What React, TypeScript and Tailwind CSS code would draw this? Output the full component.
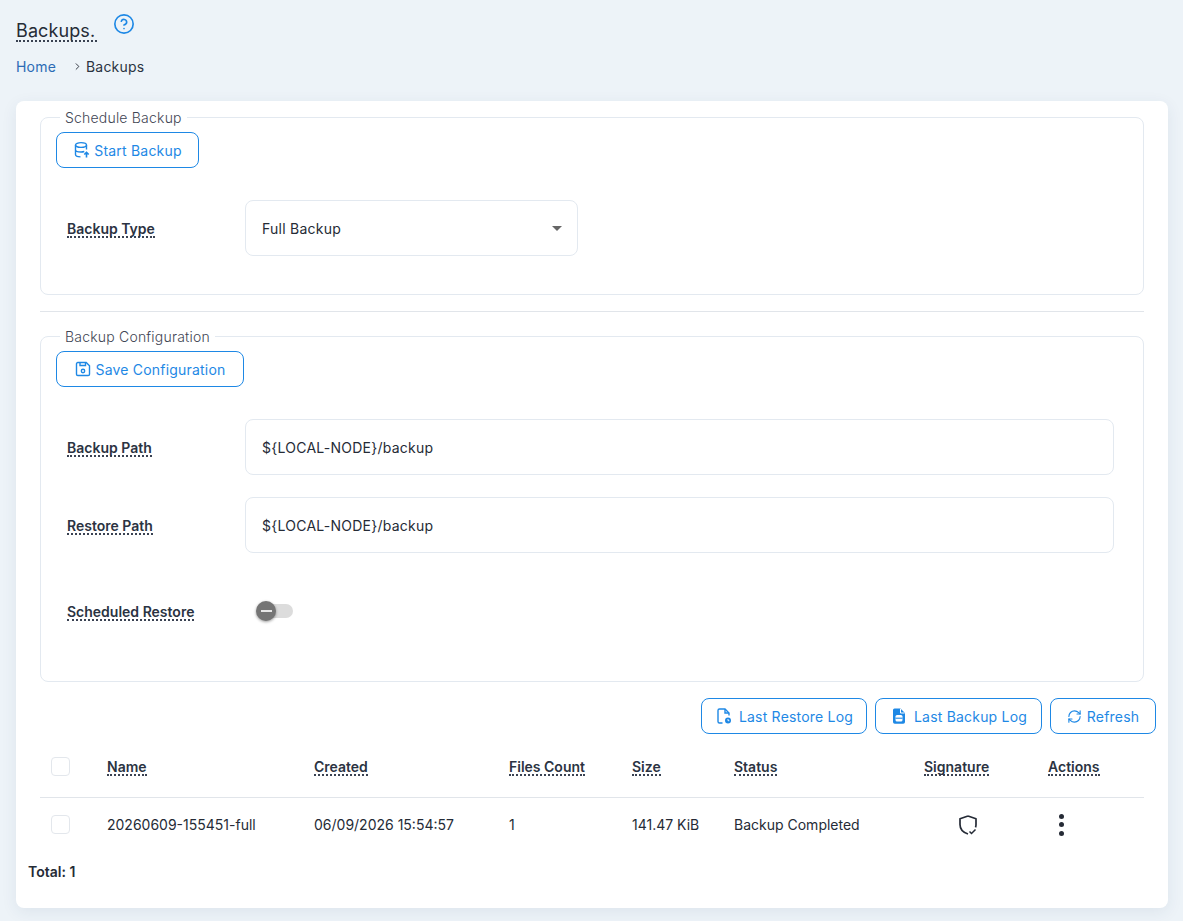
import { RefreshCw, CircleHelp, ChevronRight } from 'lucide-react';

const font = { fontFamily: 'Inter' };

function Dotted({ children, className = '' }: { children: React.ReactNode; className?: string }) {
  return (
    <span className={`border-b-2 border-dotted border-[#3a4252] leading-[15px] inline-block ${className}`}>{children}</span>
  );
}

function OutlineButton({ icon, label, className = '' }: { icon: React.ReactNode; label: string; className?: string }) {
  return (
    <button className={`h-9 flex items-center justify-center rounded-lg border border-[#1e88e5] bg-white text-[14px] text-[#1e88e5] tracking-[0.2px] ${className}`}>
      {icon}
      {label}
    </button>
  );
}

function Field({ label, value, className = '' }: { label: string; value: string; className?: string }) {
  return (
    <div className={`flex items-center ${className}`}>
      <div className="w-[178px] ml-[11px] text-[14px] font-semibold text-[#2b3342]"><Dotted>{label}</Dotted></div>
      <div className="h-14 w-[869px] flex items-center rounded-lg border border-[#e3e9f0] px-4 text-[14px] text-[#252b36] tracking-[0.25px]">{value}</div>
    </div>
  );
}

const DbIcon = (
  <svg width="18" height="18" viewBox="0 0 18 18" fill="none" stroke="currentColor" strokeWidth="1.4" className="mr-[3px]">
    <ellipse cx="8" cy="4" rx="5.5" ry="2.4" />
    <path d="M2.5 4v9.5c0 1.3 2 2.2 5 2.4M13.5 4v4.5M2.5 8.7c0 1.3 2.4 2.3 5.5 2.3 1.2 0 2.4-.2 3.3-.5" />
    <path d="M13.5 16.5v-5M11.3 13.5l2.2-2.2 2.2 2.2" strokeWidth="1.6" />
  </svg>
);

const SaveIcon = (
  <svg width="18" height="18" viewBox="0 0 18 18" fill="none" stroke="currentColor" strokeWidth="1.4" className="mr-[3px]">
    <path d="M3.8 2.5h8.4l3.3 3.3v8.4a1.3 1.3 0 0 1-1.3 1.3H3.800a1.300 1.300 0 0 1-1.300-1.300V3.800a1.300 1.300 0 0 1 1.300-1.300z" />
    <path d="M6 2.500v3h5.500v-3" />
    <circle cx="9" cy="11" r="1.700" />
  </svg>
);

const FileClockIcon = (
  <svg width="18" height="18" viewBox="0 0 18 18" fill="none" stroke="currentColor" strokeWidth="1.4" className="mr-[6px]">
    <path d="M7.500 16H4.500A1.500 1.500 0 0 1 3 14.500v-11A1.500 1.500 0 0 1 4.500 2H10l4 4v2.500" />
    <path d="M10 2v4h4" />
    <circle cx="13" cy="13.500" r="3" fill="currentColor" stroke="none" />
    <path d="M13 12v1.700h1.300" stroke="#fff" strokeWidth="0.9" />
  </svg>
);

const FileDbIcon = (
  <svg width="18" height="18" viewBox="0 0 18 18" fill="none" className="mr-[6px]">
    <path d="M4.500 1.500H10.500L15 6v9a1.800 1.800 0 0 1-1.800 1.800H4.800A1.800 1.800 0 0 1 3 15V3a1.500 1.500 0 0 1 1.500-1.500z" fill="currentColor" />
    <path d="M10.500 1.800V6h4.200" stroke="#fff" strokeWidth="1" />
    <rect x="5.500" y="8" width="7" height="6.500" rx="1.500" fill="#fff" />
    <path d="M5.500 11.200h7" stroke="currentColor" strokeWidth="1.100" />
  </svg>
);

const ShieldIcon = (
  <svg width="22" height="22" viewBox="0 0 22 22" fill="none" stroke="#252b36" strokeWidth="1.700">
    <path d="M11 2 L19 4.800 V10.500 C19 11.500 18.900 12.500 18.500 13.400 M11 20 C6.500 18.600 3 15 3 10.500 V4.800 L11 2" strokeLinejoin="round" />
    <path d="M12.500 17.500l2 2 4-4" strokeWidth="1.500" />
  </svg>
);

const columns = 'grid grid-cols-[67px_207px_195px_123px_102px_190px_124px_96px] items-center';

function Checkbox() {
  return <div className="ml-[11px] w-[19px] h-[19px] rounded-[4px] border border-[#e3e7ec] bg-white" />;
}

export default function App() {
  return (
    <div style={font} className="w-[1183px] h-[921px] overflow-hidden bg-[#edf3f8] px-4 pt-[13px] text-[#252b36]">
      <div className="flex items-start h-[35px]">
        <h1 className="mt-[9px] text-[18px] font-normal tracking-[0.1px] leading-[18px] border-b-2 border-dotted border-[#3a4252] w-[81px]">Backups.</h1>
        <CircleHelp size={22} strokeWidth={1.800} className="ml-[16px] mt-0 text-[#1e88e5]" />
      </div>
      <div className="flex items-center h-[20px] mt-[8px] text-[14px] tracking-[0.2px]">
        <span className="text-[#2c6bb5] w-[54px]">Home</span>
        <ChevronRight size={11} strokeWidth={2} className="mr-[3px] ml-[2px]" />
        <span className="text-[#2b3342]">Backups</span>
      </div>

      <div className="mt-[25px] h-[807px] w-[1152px] rounded-lg bg-white pt-[6px] px-6 shadow-[0_4px_16px_rgba(40,70,100,0.08)]">
        <fieldset className="h-[188px] rounded-lg border border-[#e3e9f0] pl-[15px] pr-[15px] m-0 min-w-0">
          <legend className="ml-[4px] px-[5px] text-[14px] leading-[21px] font-light text-[#3f4654] tracking-[0.2px]">Schedule Backup</legend>
          <OutlineButton icon={DbIcon} label="Start Backup" className="w-[143px] mt-[4px]" />
          <div className="flex items-center mt-[32px]">
            <div className="w-[178px] ml-[11px] text-[14px] font-semibold text-[#2b3342]"><Dotted>Backup Type</Dotted></div>
            <div className="h-14 w-[333px] flex items-center justify-between rounded-lg border border-[#e3e9f0] pl-4 pr-[15px] text-[14px] tracking-[0.25px]">
              Full Backup
              <span className="w-0 h-0 border-x-[5px] border-x-transparent border-t-[5px] border-t-[#666]" />
            </div>
          </div>
        </fieldset>

        <div className="mt-4 border-t border-[#e1e5ea]" />

        <fieldset className="mt-[14px] h-[356px] rounded-lg border border-[#e3e9f0] pl-[15px] pr-[15px] m-0 min-w-0">
          <legend className="ml-[4px] px-[5px] text-[14px] leading-[21px] font-light text-[#3f4654] tracking-[0.2px]">Backup Configuration</legend>
          <OutlineButton icon={SaveIcon} label="Save Configuration" className="w-[188px] mt-[4px]" />
          <Field label="Backup Path" value="${LOCAL-NODE}/backup" className="mt-[32px]" />
          <Field label="Restore Path" value="${LOCAL-NODE}/backup" className="mt-[22px]" />
          <div className="flex items-center mt-[46px] h-[24px]">
            <div className="w-[178px] ml-[11px] text-[14px] font-semibold text-[#2b3342]"><Dotted>Scheduled Restore</Dotted></div>
            <div className="relative ml-[12px] w-[36px] h-[14px] rounded-full bg-[#dcdcdc]">
              <span className="absolute -left-[1px] top-[-3px] w-5 h-5 rounded-full bg-[#757575] shadow-[0_1px_3px_rgba(0,0,0,0.4)] flex items-center justify-center">
                <span className="w-[11px] h-[2px] bg-[#e8e8e8]" />
              </span>
            </div>
          </div>
        </fieldset>

        <div className="mt-4 -mr-3 flex justify-end gap-2">
          <OutlineButton icon={FileClockIcon} label="Last Restore Log" className="w-[166px]" />
          <OutlineButton icon={FileDbIcon} label="Last Backup Log" className="w-[167px]" />
          <OutlineButton icon={<RefreshCw size={15} strokeWidth={1.800} className="mr-[5px]" />} label="Refresh" className="w-[106px]" />
        </div>

        <div className={`${columns} h-[63px] mt-[1px] border-b border-[#e1e5ea] text-[14px] font-semibold text-[#2b3342]`}>
          <Checkbox />
          <div><Dotted>Name</Dotted></div>
          <div><Dotted>Created</Dotted></div>
          <div><Dotted>Files Count</Dotted></div>
          <div><Dotted>Size</Dotted></div>
          <div><Dotted>Status</Dotted></div>
          <div><Dotted>Signature</Dotted></div>
          <div><Dotted>Actions</Dotted></div>
        </div>
        <div className={`${columns} h-[53px] text-[14px]`}>
          <Checkbox />
          <div>20260609-155451-full</div>
          <div>06/09/2026 15:54:57</div>
          <div>1</div>
          <div>141.47 KiB</div>
          <div>Backup Completed</div>
          <div className="pl-[33px]">{ShieldIcon}</div>
          <div className="pl-[11px] flex flex-col gap-[3.500px]">
            <span className="w-[5px] h-[5px] rounded-full bg-[#252b36]" />
            <span className="w-[5px] h-[5px] rounded-full bg-[#252b36]" />
            <span className="w-[5px] h-[5px] rounded-full bg-[#252b36]" />
          </div>
        </div>
        <div className="-ml-3 mt-[11px] text-[14px] font-semibold leading-[20px]">Total: 1</div>
      </div>
    </div>
  );
}
